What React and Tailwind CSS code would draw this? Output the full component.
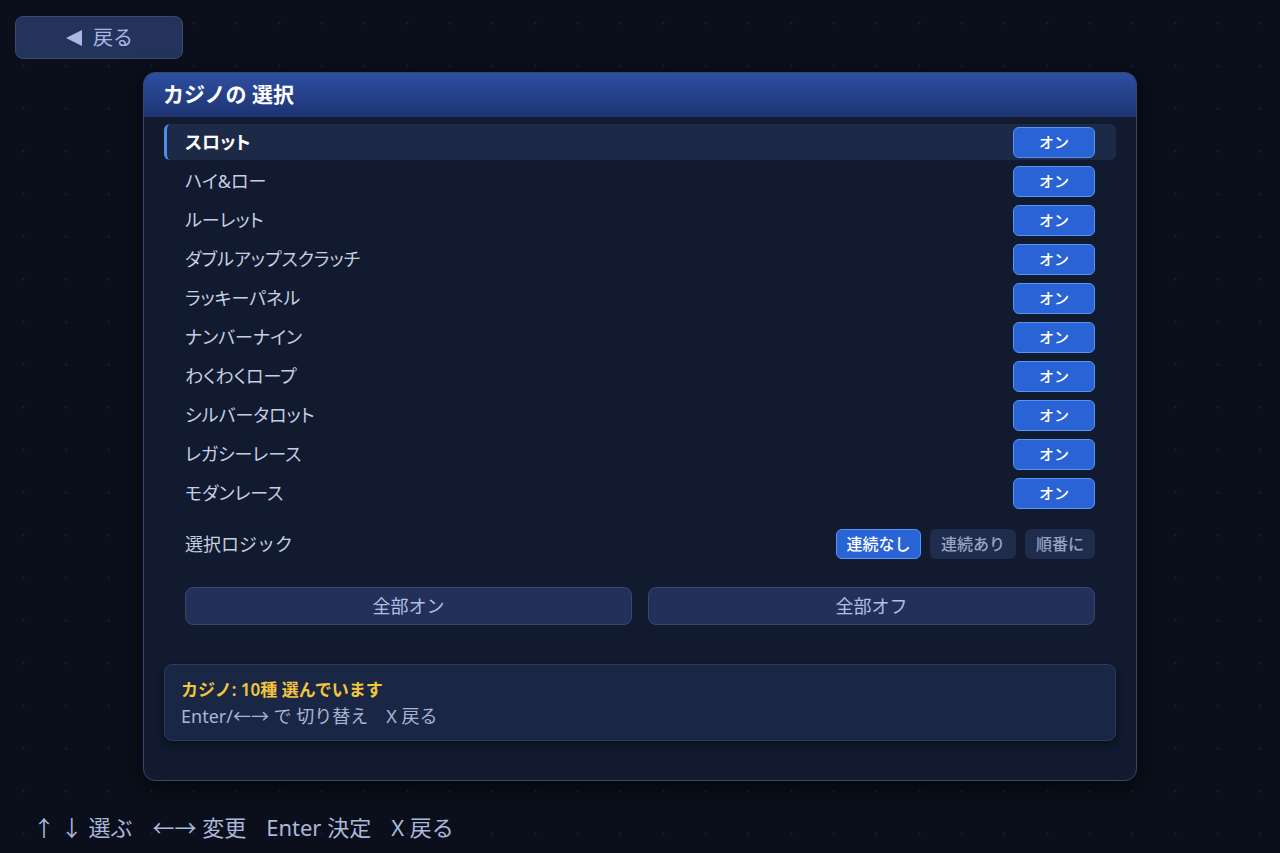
const games = [
  'スロット',
  'ハイ&ロー',
  'ルーレット',
  'ダブルアップスクラッチ',
  'ラッキーパネル',
  'ナンバーナイン',
  'わくわくロープ',
  'シルバータロット',
  'レガシーレース',
  'モダンレース',
]

const logic = [
  { label: '連続なし', on: true },
  { label: '連続あり', on: false },
  { label: '順番に', on: false },
]

const font = { fontFamily: '"Noto Sans", "Noto Sans CJK JP", sans-serif' }
const palt = { fontFeatureSettings: '"palt"' }

export default function App() {
  return (
    <div
      style={font}
      className="relative w-[1280px] h-[853px] overflow-hidden bg-[#0a0f1b] bg-[radial-gradient(circle,#171e2f_1px,transparent_1.6px)] bg-[length:42.67px_42.67px] bg-[position:2px_2px]"
    >
      {/* Back button */}
      <div className="absolute left-[15px] top-[16px] w-[168px] h-[43px] rounded-lg bg-[#23335c] border border-[#3b4a72] flex items-center justify-center gap-[10px] text-[#aab8e0] text-[20px]">
        <svg width="18" height="18" viewBox="0 0 18 18" className="mt-[1px]">
          <path d="M1 9 L17 1 L17 17 Z" fill="#aab8e0" />
        </svg>
        <span>戻る</span>
      </div>

      {/* Main panel */}
      <div className="absolute left-[143px] top-[72px] w-[994px] h-[709px] rounded-xl border border-[#38466a] bg-[#111a2f] shadow-[0_6px_24px_rgba(0,0,0,0.6)] overflow-hidden flex flex-col">
        <div className="h-[44px] shrink-0 bg-gradient-to-b from-[#2d4fa2] to-[#1d3472] flex items-center px-[19px] text-white text-[21px] font-bold">
          カジノの 選択
        </div>

        <div className="px-[20px] pt-[7px] flex flex-col gap-[3px]">
          {games.map((g, i) => (
            <div
              key={g}
              className={
                i === 0
                  ? 'h-[36px] flex items-center justify-between rounded-md bg-[#1d2a47] border-l-[3px] border-[#4b8fe6] pl-[18px] pr-[21px]'
                  : 'h-[36px] flex items-center justify-between pl-[21px] pr-[21px]'
              }
            >
              <span
                style={palt}
                className={
                  i === 0
                    ? 'text-white text-[18px] font-semibold'
                    : 'text-[#c7cfe4] text-[18px]'
                }
              >
                {g}
              </span>
              <span className="w-[82px] h-[31px] rounded-md bg-[#2a63d6] border border-[#5596f2] flex items-center justify-center text-white text-[15px] font-medium">
                オン
              </span>
            </div>
          ))}
        </div>

        {/* Selection logic */}
        <div className="px-[41px] mt-[17px] h-[32px] flex items-center justify-between">
          <span className="text-[#c7cfe4] text-[18px]">選択ロジック</span>
          <div className="flex gap-[9px]">
            {logic.map((l) => (
              <span
                key={l.label}
                className={
                  l.on
                    ? 'h-[30px] px-[9.5px] rounded-md bg-[#2a63d6] border border-[#5596f2] flex items-center text-white text-[16px] font-medium'
                    : 'h-[30px] px-[11px] rounded-md bg-[#202c4b] flex items-center text-[#98a4c4] text-[16px] font-medium'
                }
              >
                {l.label}
              </span>
            ))}
          </div>
        </div>

        <div className="px-[41px] mt-[27px] grid grid-cols-2 gap-[16px]">
          <div className="h-[38px] rounded-lg bg-[#22305a] border border-[#38476e] flex items-center justify-center text-[#b3c0e2] text-[18px]">
            全部オン
          </div>
          <div className="h-[38px] rounded-lg bg-[#22305a] border border-[#38476e] flex items-center justify-center text-[#b3c0e2] text-[18px]">
            全部オフ
          </div>
        </div>

        {/* Status box */}
        <div className="mx-[20px] mt-[39px] h-[77px] rounded-lg bg-[#1a2744] border border-[#2c3a5c] shadow-[0_4px_10px_rgba(0,0,0,0.45)] px-[16px] flex flex-col justify-center gap-[4px]">
          <span className="text-[#f2c53d] text-[17px] font-semibold leading-[23px]">
            カジノ: 10種 選んでいます
          </span>
          <span className="text-[#a9b5d5] text-[18px] leading-[23px]">
            Enter/←→ で 切り替え　X 戻る
          </span>
        </div>
      </div>

      {/* Footer hints */}
      <div className="absolute left-[33px] top-[811px] flex items-center gap-[20px] text-[#aab8dc] text-[22px]">
        <span>↑ ↓ 選ぶ</span>
        <span>←→ 変更</span>
        <span>Enter 決定</span>
        <span>X 戻る</span>
      </div>
    </div>
  )
}
